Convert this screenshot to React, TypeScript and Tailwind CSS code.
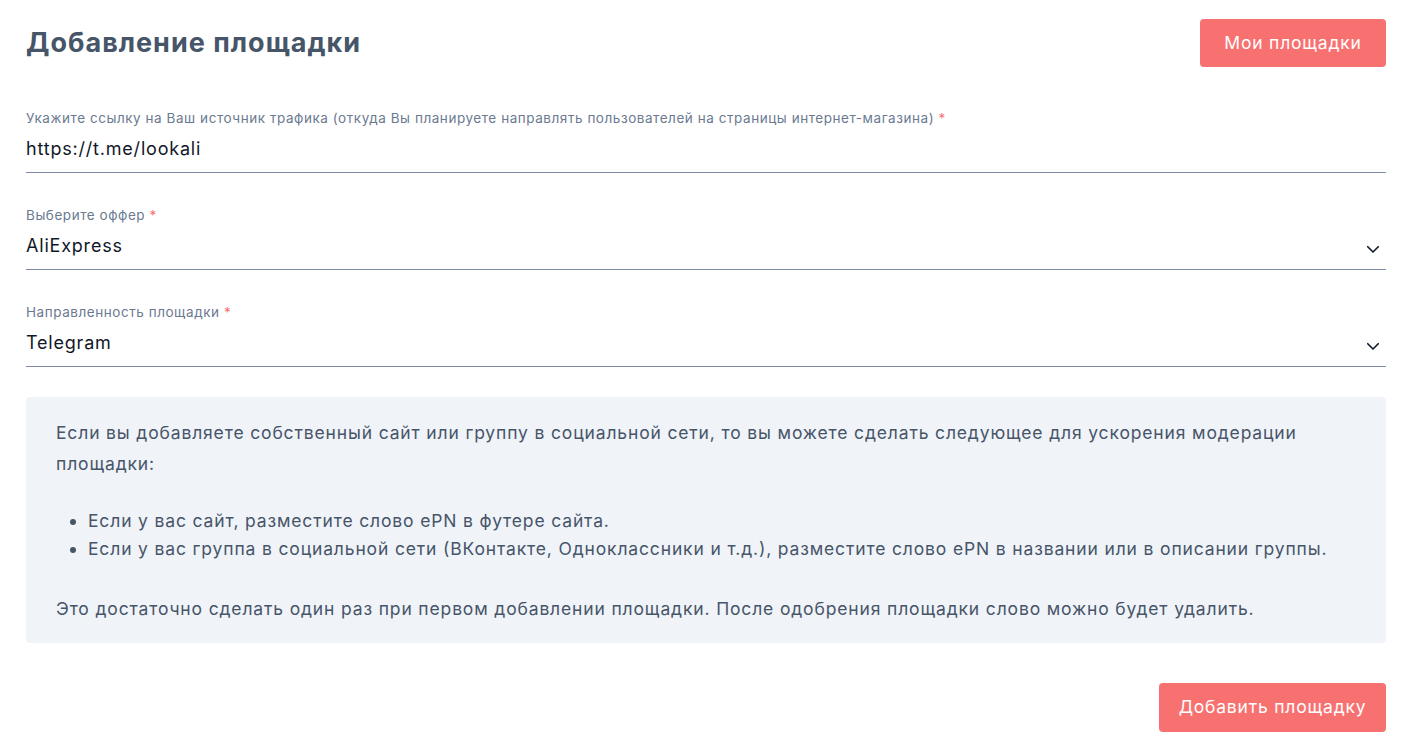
import React from "react";

function Chevron() {
  return (
    <svg width="18" height="18" viewBox="0 0 24 24" fill="none" stroke="#111827" strokeWidth="2.2" strokeLinecap="round" strokeLinejoin="round">
      <path d="M5 9l7 7 7-7" />
    </svg>
  );
}

function Field({ label, value, select }: { label: string; value: string; select?: boolean }) {
  return (
    <div className="border-b border-[#7b8aa6] pb-[10px]">
      <div className="text-[13.5px] leading-[18px] tracking-[0.55px] text-[#6b7a90]">
        {label} <span className="text-[#f87171]">*</span>
      </div>
      <div className="mt-[9px] flex items-center justify-between">
        <span className="text-[18px] leading-[26px] tracking-[0.8px] text-[#111827]">{value}</span>
        {select && (
          <span className="mr-[4px] mt-[6px]">
            <Chevron />
          </span>
        )}
      </div>
    </div>
  );
}

export default function App() {
  return (
    <div className="min-h-[746px] bg-white pl-[26px] pr-[32px] pt-[19px] pb-[15px]" style={{ fontFamily: "Inter, 'Noto Sans', sans-serif" }}>
      <div className="flex items-center justify-between">
        <h1 className="text-[27px] font-bold leading-[48px] tracking-[1px] text-[#475569]">Добавление площадки</h1>
        <button className="h-[48px] w-[186px] rounded-[4px] bg-[#f87171] text-[17.5px] tracking-[0.8px] text-white">Мои площадки</button>
      </div>
      <div className="mt-[42px] flex flex-col gap-[33px]">
        <Field label="Укажите ссылку на Ваш источник трафика (откуда Вы планируете направлять пользователей на страницы интернет-магазина)" value="https://t.me/lookali" />
        <Field label="Выберите оффер" value="AliExpress" select />
        <Field label="Направленность площадки" value="Telegram" select />
      </div>
      <div className="mt-[30px] rounded-[4px] bg-[#f0f3f8] px-[30px] pt-[20px] pb-[19px] text-[17.5px] tracking-[0.85px] text-[#475569]">
        <p className="leading-[31px]">
          Если вы добавляете собственный сайт или группу в социальной сети, то вы можете сделать следующее для ускорения модерации площадки:
        </p>
        <ul className="mt-[28px] list-disc pl-[32px] leading-[28px]">
          <li>Если у вас сайт, разместите слово ePN в футере сайта.</li>
          <li>Если у вас группа в социальной сети (ВКонтакте, Одноклассники и т.д.), разместите слово ePN в названии или в описании группы.</li>
        </ul>
        <p className="mt-[30px] leading-[31px]">
          Это достаточно сделать один раз при первом добавлении площадки. После одобрения площадки слово можно будет удалить.
        </p>
      </div>
      <div className="mt-[40px] flex justify-end">
        <button className="h-[49px] w-[227px] rounded-[4px] bg-[#f87171] text-[17.5px] tracking-[0.8px] text-white">Добавить площадку</button>
      </div>
    </div>
  );
}
